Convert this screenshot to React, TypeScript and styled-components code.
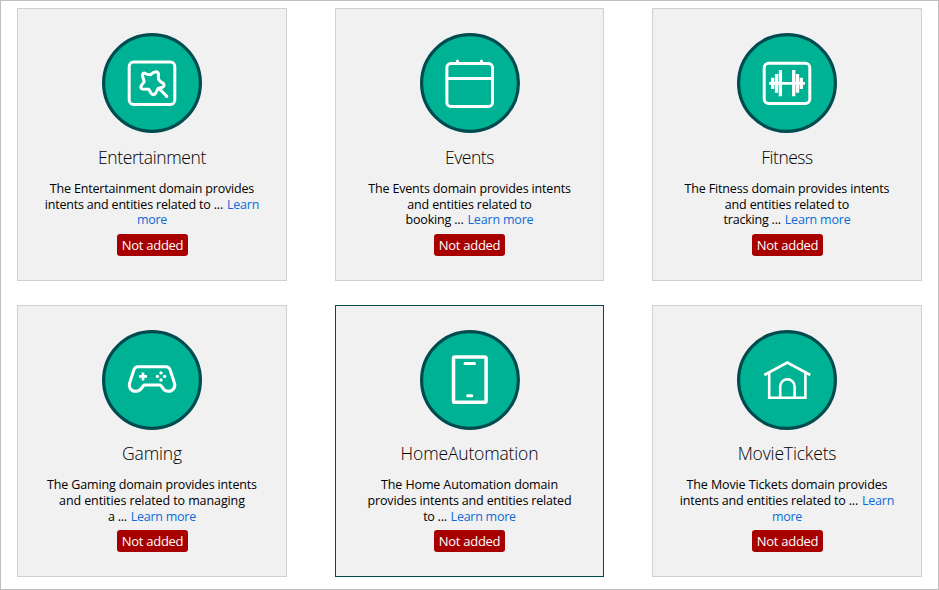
import React from 'react';
import styled, { createGlobalStyle } from 'styled-components';

const GlobalStyle = createGlobalStyle`
  *, *::before, *::after { box-sizing: border-box; }
  body { margin: 0; background: #fff; }
`;

const Page = styled.main`
  width: 939px;
  height: 590px;
  padding: 7px 16px 12px;
  border: 1px solid #bfbfbf;
  overflow: hidden;
  background: #fff;
  color: #000;
  font-family: "Open Sans", "Noto Sans", sans-serif;
`;

const DomainGrid = styled.div`
  display: grid;
  grid-template-columns: 270px 269px 270px;
  grid-template-rows: 273px 272px;
  gap: 24px 48px;
`;

const Badge = styled.svg`
  display: block;
  flex: none;
  width: 100px;
  height: 100px;
  fill: none;
  stroke: #fff;
  stroke-width: 3;
  stroke-linejoin: round;
`;

const Title = styled.h2<{ $tracking: number; $raised?: boolean }>`
  margin: ${({ $raised }) => ($raised ? 11 : 12)}px 0 0;
  font-size: 17.5px;
  font-weight: 300;
  line-height: 24px;
  white-space: nowrap;
  letter-spacing: ${({ $tracking }) => $tracking}px;
`;

const Description = styled.p<{ $raised?: boolean }>`
  margin: 12px 0 0;
  font-size: 12.5px;
  line-height: ${({ $raised }) => ($raised ? 16 : 15.6)}px;
  text-align: center;
`;

const Line = styled.span<{ $tracking: number }>`
  display: block;
  white-space: nowrap;
  letter-spacing: ${({ $tracking }) => $tracking}px;
`;

const LearnMore = styled.a<{ $spaced?: boolean }>`
  margin-left: ${({ $spaced }) => ($spaced ? 0.9 : 0)}px;
  color: #0b6bd8;
  text-decoration: none;
`;

const Status = styled.span<{ $raised?: boolean }>`
  display: flex;
  align-items: center;
  justify-content: center;
  width: 71px;
  height: 22px;
  margin-top: ${({ $raised }) => ($raised ? 5 : 6.2)}px;
  margin-left: 1px;
  border-radius: 3px;
  background: #a80000;
  color: #fff;
  font-size: 13px;
  letter-spacing: -0.27px;
  white-space: nowrap;
`;

const Card = styled.article<{ $active?: boolean }>`
  display: flex;
  flex-direction: column;
  align-items: center;
  padding-top: 24px;
  border: 1px solid ${({ $active }) => ($active ? '#004b50' : '#d0d0d0')};
  background: #f1f1f1;

  /* The middle column has an odd width, so its contents are aligned to whole pixels. */
  &:nth-child(3n + 2) ${Badge} { margin-left: 1px; }
  &:nth-child(3n + 2) ${Status} { margin-left: 0; }
`;

type LineData = { text?: string; link?: string; tracking: number };
type Domain = {
  name: string;
  tracking: number;
  icon: React.ReactNode;
  lines: LineData[];
  active?: boolean;
};

const domains: Domain[] = [
  {
    name: 'Entertainment',
    tracking: -0.38,
    icon: (
      <>
        <rect x="27.2" y="28.9" width="45.6" height="42.6" rx="4.5" />
        <path
          d="M42.3 40 Q45 41.8 48.3 41.8 Q51 39.2 54.3 38.8 Q56.8 39 56.4 42 L56.6 46.6 Q58 49 61.5 50.5 Q63 53 60.5 54.2 L56 55.5 Q54.8 58.5 53 61 Q50.5 62.5 49 60 L46.8 56.3 Q44 56 40.5 56 Q37.8 55 39.5 52.3 L42.2 48.6 Q41.4 46 40.4 42.5 Q40.4 40.2 42.3 40 Z"
        />
        <path strokeLinecap="round" d="M57.8 56.3 L64.8 63.4" />
      </>
    ),
    lines: [
      { text: 'The Entertainment domain provides', tracking: -0.18 },
      { text: 'intents and entities related to ... ', link: 'Learn', tracking: -0.19 },
      { link: 'more', tracking: -0.3 },
    ],
  },
  {
    name: 'Events',
    tracking: -0.45,
    icon: (
      <>
        <rect x="26.9" y="30.6" width="45.6" height="42.8" rx="4" />
        <path d="M27 45.4 H72.5 M37.5 30 V28 M61.5 30 V28" strokeLinecap="round" />
      </>
    ),
    lines: [
      { text: 'The Events domain provides intents', tracking: -0.16 },
      { text: 'and entities related to', tracking: -0.17 },
      { text: 'booking ... ', link: 'Learn more', tracking: -0.18 },
    ],
  },
  {
    name: 'Fitness',
    tracking: -0.5,
    icon: (
      <>
        <rect x="27.2" y="30.2" width="45.6" height="40.4" rx="4.5" />
        <path d="M32 50.4 H68" strokeWidth="2.8" />
        <path
          strokeWidth="3.3"
          d="M43.4 37 V63.3 M39.5 41 V59.7 M35.6 44.7 V56 M56.7 37 V63.3 M60.5 41 V59.7 M64.3 44.7 V56"
        />
      </>
    ),
    lines: [
      { text: 'The Fitness domain provides intents', tracking: -0.16 },
      { text: 'and entities related to', tracking: -0.17 },
      { text: 'tracking ... ', link: 'Learn more', tracking: -0.2 },
    ],
  },
  {
    name: 'Gaming',
    tracking: -0.15,
    icon: (
      <>
        <path d="M36 36.7 H64 Q67 36.7 68 39.5 L72.3 52.5 C74 57 71 61.3 66.5 61.3 C63.5 61.3 61.7 60 60.5 57.5 L58.3 55 H42 L39.3 58.5 C37.8 60.5 36 61.3 33.5 61.3 C29 61.3 26.3 57 27.8 52.5 L32 39.5 Q33 36.7 36 36.7 Z" />
        <path strokeWidth="2.7" d="M37 46.4 H45 M41 42.4 V50.4" />
        <g fill="#fff" stroke="none">
          <circle cx="59" cy="42.9" r="1.7" />
          <circle cx="55.4" cy="46.4" r="1.7" />
          <circle cx="62.6" cy="46.4" r="1.7" />
          <circle cx="59" cy="50" r="1.7" />
        </g>
      </>
    ),
    lines: [
      { text: 'The Gaming domain provides intents', tracking: -0.15 },
      { text: 'and entities related to managing', tracking: -0.1 },
      { text: 'a ... ', link: 'Learn more', tracking: -0.25 },
    ],
  },
  {
    name: 'HomeAutomation',
    tracking: -0.16,
    active: true,
    icon: (
      <>
        <rect x="33.5" y="26.9" width="32.6" height="45.4" rx="1.4" strokeWidth="3.5" />
        <path strokeLinecap="round" d="M45 33.5 H54.5 M47.6 65.7 H51.8" />
      </>
    ),
    lines: [
      { text: 'The Home Automation domain', tracking: -0.12 },
      { text: 'provides intents and entities related', tracking: -0.17 },
      { text: 'to ... ', link: 'Learn more', tracking: -0.25 },
    ],
  },
  {
    name: 'MovieTickets',
    tracking: -0.15,
    icon: (
      <g strokeWidth="2.6" strokeLinejoin="miter">
        <path d="M27.3 45 L50.3 32.6 L73.3 45" />
        <path d="M32.2 42.5 V67.7 H68.4 V42.5" />
        <path d="M43.2 67.7 V56.5 A7.2 7.2 0 0 1 57.6 56.5 V67.7" />
      </g>
    ),
    lines: [
      { text: 'The Movie Tickets domain provides', tracking: -0.11 },
      { text: 'intents and entities related to ... ', link: 'Learn', tracking: -0.19 },
      { link: 'more', tracking: -0.3 },
    ],
  },
];

function DomainCard({ domain, raised }: { domain: Domain; raised: boolean }) {
  return (
    <Card $active={domain.active}>
      <Badge viewBox="0 0 100 100" aria-hidden="true">
        <circle cx="50" cy="50" r="48.4" fill="#00b294" stroke="#004b50" strokeWidth="3.2" />
        {domain.icon}
      </Badge>
      <Title $tracking={domain.tracking} $raised={raised}>{domain.name}</Title>
      <Description $raised={raised}>
        {domain.lines.map((line, i) => (
          <Line key={i} $tracking={line.tracking}>
            {line.text}
            {line.link && <LearnMore $spaced={Boolean(line.text)}>{line.link}</LearnMore>}
          </Line>
        ))}
      </Description>
      <Status $raised={raised}>Not added</Status>
    </Card>
  );
}

export default function App() {
  return (
    <>
      <GlobalStyle />
      <Page>
        <DomainGrid>
          {domains.map((domain, i) => (
            <DomainCard key={domain.name} domain={domain} raised={i > 2} />
          ))}
        </DomainGrid>
      </Page>
    </>
  );
}
